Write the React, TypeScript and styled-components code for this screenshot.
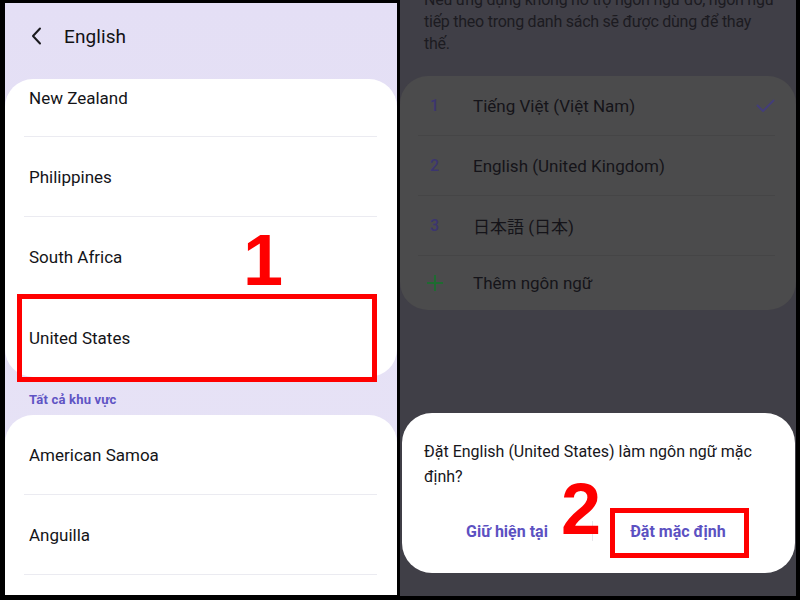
import styled, { createGlobalStyle } from 'styled-components';

const GlobalStyle = createGlobalStyle`
  html, body {
    margin: 0;
    padding: 0;
    background: #000;
  }
  * {
    box-sizing: border-box;
  }
  body {
    font-family: Roboto, "Noto Sans", "Noto Sans CJK JP", sans-serif;
  }
`;

const Frame = styled.div`
  width: 800px;
  height: 600px;
  display: flex;
  align-items: flex-start;
  background: #000;
  overflow: hidden;
`;

const LeftPanel = styled.div`
  position: relative;
  width: 392px;
  height: 592px;
  margin: 3px 0 0 5px;
  background: linear-gradient(180deg, #e4dff5 0%, #e7e3f6 100%);
  display: flex;
  flex-direction: column;
  overflow: hidden;
`;

const Header = styled.div`
  height: 76px;
  padding: 0 0 10px 25px;
  display: flex;
  align-items: center;
  gap: 20px;
  flex-shrink: 0;
`;

const HeaderTitle = styled.span`
  font-size: 19px;
  color: #121214;
  letter-spacing: 0.1px;
`;

const Card = styled.div<{ $open?: boolean }>`
  background: #fff;
  border-radius: ${(p) => (p.$open ? '28px 28px 0 0' : '28px')};
  padding: 0 20px 0 19px;
  flex-shrink: 0;
  overflow: hidden;
`;

const Row = styled.div<{ $first?: boolean; $last?: boolean }>`
  height: ${(p) => (p.$first ? '58px' : '80px')};
  padding: ${(p) => (p.$first ? '9px 0 0 5px' : '1px 0 0 5px')};
  display: flex;
  align-items: ${(p) => (p.$first ? 'flex-start' : 'center')};
  border-bottom: ${(p) => (p.$last ? 'none' : '1px solid #ebebf1')};
  font-size: 17px;
  color: #141418;
`;

const SectionLabel = styled.div`
  height: 38px;
  padding: 7px 0 0 24px;
  display: flex;
  align-items: center;
  font-size: 13px;
  font-weight: 700;
  color: #5f54c4;
  letter-spacing: 0.2px;
  flex-shrink: 0;
`;

const RedBox = styled.div`
  position: absolute;
  border: 5px solid #ff0000;
  pointer-events: none;
`;

const StepNumber = styled.div`
  position: absolute;
  font-family: "Liberation Sans", Arial, sans-serif;
  font-weight: 700;
  font-size: 72px;
  line-height: 1;
  color: #ff0000;
  width: 60px;
  text-align: center;
`;

const RightPanel = styled.div`
  position: relative;
  width: 396px;
  height: 596px;
  margin-left: 3px;
  background: #403f47;
  display: flex;
  flex-direction: column;
  overflow: hidden;
`;

const Note = styled.p`
  margin: -11px 0 0 0;
  padding: 0 16px 0 24px;
  font-size: 16px;
  line-height: 22px;
  letter-spacing: -0.25px;
  color: #1c1b21;
  white-space: nowrap;
`;

const NoteLine = styled.span`
  display: block;
`;

const LangCard = styled.div`
  margin-top: 21px;
  background: #4b4b4c;
  border-radius: 28px;
  padding: 0 21px 0 18px;
`;

const LangRow = styled.div<{ $last?: boolean }>`
  height: ${(p) => (p.$last ? '54px' : '60px')};
  display: flex;
  align-items: center;
  border-bottom: ${(p) => (p.$last ? 'none' : '1px solid #454546')};
  font-size: 17px;
  color: #151419;
`;

const LangIndex = styled.span<{ $icon?: boolean }>`
  width: 55px;
  padding-left: ${(p) => (p.$icon ? '8px' : '12px')};
  font-size: 16px;
  font-weight: 500;
  color: #3b3570;
  display: flex;
  align-items: center;
`;

const LangName = styled.span`
  flex: 1;
`;

const Dialog = styled.div`
  position: relative;
  margin: auto 1px 23px 2px;
  height: 160px;
  background: #fff;
  border-radius: 30px;
  padding: 26px 32px 0 20px;
  display: flex;
  flex-direction: column;
`;

const DialogText = styled.div`
  padding-left: 2px;
  font-size: 16px;
  line-height: 25px;
  color: #17161b;
`;

const DialogActions = styled.div`
  margin-top: 20px;
  height: 44px;
  display: flex;
  align-items: center;
`;

const ActionButton = styled.button`
  flex: 1;
  background: none;
  border: none;
  font-family: Roboto, "Noto Sans", sans-serif;
  font-size: 16px;
  font-weight: 700;
  color: #5c51c2;
  cursor: pointer;
  padding: 0;
`;

const ActionDivider = styled.span`
  width: 1px;
  height: 20px;
  background: #e6e6ea;
`;

function BackIcon(): JSX.Element {
  return (
    <svg width="14" height="18" viewBox="0 0 14 18" fill="none">
      <path d="M10 1.5 L3 9 L10 16.5" stroke="#1a1a1e" strokeWidth="2" strokeLinecap="round" strokeLinejoin="round" />
    </svg>
  );
}

function CheckIcon(): JSX.Element {
  return (
    <svg width="19" height="14" viewBox="0 0 19 14" fill="none">
      <path d="M1.5 6.5 L7 12 L17.5 1.5" stroke="#433d7a" strokeWidth="1.8" strokeLinecap="round" strokeLinejoin="round" />
    </svg>
  );
}

function PlusIcon(): JSX.Element {
  return (
    <svg width="18" height="18" viewBox="0 0 18 18" fill="none">
      <path d="M9 1 V17 M1 9 H17" stroke="#1f6b31" strokeWidth="2" />
    </svg>
  );
}

const suggested = ['New Zealand', 'Philippines', 'South Africa', 'United States'];
const allRegions = ['American Samoa', 'Anguilla', 'Antigua và Barbuda'];
const languages = ['Tiếng Việt (Việt Nam)', 'English (United Kingdom)', '日本語 (日本)'];

function App(): JSX.Element {
  return (
    <>
      <GlobalStyle />
      <Frame>
        <LeftPanel>
          <Header>
            <BackIcon />
            <HeaderTitle>English</HeaderTitle>
          </Header>
          <Card>
            {suggested.map((name, i) => (
              <Row key={name} $first={i === 0} $last={i === suggested.length - 1}>
                {name}
              </Row>
            ))}
          </Card>
          <SectionLabel>Tất cả khu vực</SectionLabel>
          <Card $open>
            {allRegions.map((name) => (
              <Row key={name}>{name}</Row>
            ))}
          </Card>
          <RedBox style={{ left: 12, top: 291, width: 360, height: 88 }} />
          <StepNumber style={{ left: 228, top: 221 }}>1</StepNumber>
        </LeftPanel>
        <RightPanel>
          <Note>
            <NoteLine>Nếu ứng dụng không hỗ trợ ngôn ngữ đó, ngôn ngữ</NoteLine>
            <NoteLine>tiếp theo trong danh sách sẽ được dùng để thay</NoteLine>
            <NoteLine>thế.</NoteLine>
          </Note>
          <LangCard>
            {languages.map((lang, i) => (
              <LangRow key={lang}>
                <LangIndex>{i + 1}</LangIndex>
                <LangName>{lang}</LangName>
                {i === 0 && <CheckIcon />}
              </LangRow>
            ))}
            <LangRow $last>
              <LangIndex $icon>
                <PlusIcon />
              </LangIndex>
              <LangName>Thêm ngôn ngữ</LangName>
            </LangRow>
          </LangCard>
          <Dialog>
            <DialogText>Đặt English (United States) làm ngôn ngữ mặc định?</DialogText>
            <DialogActions>
              <ActionButton>Giữ hiện tại</ActionButton>
              <ActionDivider />
              <ActionButton>Đặt mặc định</ActionButton>
            </DialogActions>
          </Dialog>
          <RedBox style={{ left: 210, top: 508, width: 139, height: 50 }} />
          <StepNumber style={{ left: 151, top: 473 }}>2</StepNumber>
        </RightPanel>
      </Frame>
    </>
  );
}

export default App;
